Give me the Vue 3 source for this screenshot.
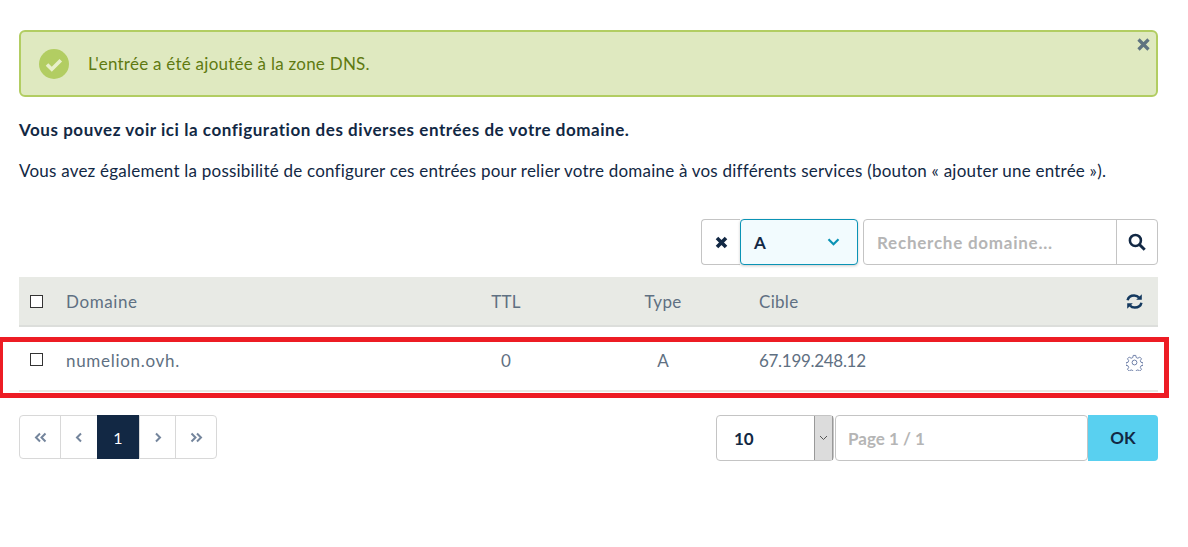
<script setup>
const pages = [
  { k: 'first', w: 40 },
  { k: 'prev', w: 37 },
  { k: 'cur', w: 42 },
  { k: 'next', w: 36 },
  { k: 'last', w: 41 }
]
</script>

<template>
  <div class="page">
    <div class="alert">
      <svg class="ok" width="30" height="30" viewBox="0 0 30 30">
        <circle cx="15" cy="15" r="15" fill="#b2cd62" />
        <path d="M8 15.500l4.800 4.800 9-9" fill="none" stroke="#e8f0ca" stroke-width="3.600" />
      </svg>
      <span class="alert-text">L'entrée a été ajoutée à la zone DNS.</span>
      <svg class="close" width="13" height="13" viewBox="0 0 13 13">
        <path d="M1.500 1.500l10 10M11.500 1.500l-10 10" stroke="#5f7480" stroke-width="3.200" fill="none" />
      </svg>
    </div>

    <p class="lead">Vous pouvez voir ici la configuration des diverses entrées de votre domaine.</p>
    <p class="desc">Vous avez également la possibilité de configurer ces entrées pour relier votre domaine à vos différents services (bouton « ajouter une entrée »).</p>

    <div class="filters">
      <div class="clear">
        <svg width="13" height="13" viewBox="0 0 13 13">
          <path d="M2 2l9 9M11 2l-9 9" stroke="#122844" stroke-width="3.600" fill="none" />
        </svg>
      </div>
      <div class="type-select">
        <span>A</span>
        <svg width="13" height="8" viewBox="0 0 13 8">
          <path d="M1.500 1.200l5 5 5-5" stroke="#0a93b5" stroke-width="2.200" fill="none" />
        </svg>
      </div>
      <div class="search">
        <span class="search-text">Recherche domaine...</span>
        <div class="search-btn">
          <svg width="18" height="18" viewBox="0 0 17 17">
            <circle cx="7" cy="7" r="5.200" fill="none" stroke="#122844" stroke-width="2.400" />
            <path d="M10.800 10.800l5 5" stroke="#122844" stroke-width="2.800" fill="none" />
          </svg>
        </div>
      </div>
    </div>

    <div class="row head">
      <div class="c-check"><span class="box"></span></div>
      <div class="c-domain">Domaine</div>
      <div class="c-ttl">TTL</div>
      <div class="c-type">Type</div>
      <div class="c-target">Cible</div>
      <div class="c-action">
        <svg width="17" height="17" viewBox="0 0 17 17">
          <path d="M1.600 7.200C2.200 4.200 4.800 2.400 8.200 2.400c2 0 3.700.8 4.800 2.100M15.400 9.800c-.6 3-3.200 4.800-6.600 4.800-2 0-3.700-.8-4.800-2.100" fill="none" stroke="#14395f" stroke-width="2.500" />
          <path d="M15.800 1.200v5.600h-5.600zM1.200 15.800v-5.600h5.600z" fill="#14395f" />
        </svg>
      </div>
    </div>

    <div class="row body">
      <div class="c-check"><span class="box"></span></div>
      <div class="c-domain">numelion.ovh.</div>
      <div class="c-ttl">0</div>
      <div class="c-type">A</div>
      <div class="c-target ip">67.199.248.12</div>
      <div class="c-action">
        <svg width="17" height="17" viewBox="0 0 24 24" fill="none" stroke="#6e80a8" stroke-width="1.400">
          <circle cx="12" cy="12" r="3.400" />
          <path d="M10.200 2h3.600l.6 3 2.400 1 2.600-1.700 2.500 2.500-1.700 2.600 1 2.400 3 .6v3.600l-3 .6-1 2.400 1.700 2.600-2.500 2.500-2.600-1.700-2.400 1-.6 3h-3.600l-.6-3-2.400-1-2.600 1.700-2.500-2.500 1.700-2.600-1-2.400-3-.6v-3.600l3-.6 1-2.400-1.700-2.600 2.500-2.500L7.200 6l2.400-1z" />
        </svg>
      </div>
    </div>

    <div class="foot">
      <div class="pager">
        <div v-for="p in pages" :key="p.k" class="pg" :class="{ on: p.k === 'cur' }" :style="{ width: p.w + 'px' }">
          <span v-if="p.k === 'cur'">1</span>
          <svg v-else-if="p.k === 'first'" width="13" height="11" viewBox="0 0 13 11"><path d="M6 1.500L2 5.500l4 4M11.500 1.500l-4 4 4 4" fill="none" stroke="#74859c" stroke-width="2" /></svg>
          <svg v-else-if="p.k === 'prev'" width="8" height="11" viewBox="0 0 8 11"><path d="M6 1.500l-4 4 4 4" fill="none" stroke="#74859c" stroke-width="2" /></svg>
          <svg v-else-if="p.k === 'next'" width="8" height="11" viewBox="0 0 8 11"><path d="M2 1.500l4 4-4 4" fill="none" stroke="#74859c" stroke-width="2" /></svg>
          <svg v-else width="13" height="11" viewBox="0 0 13 11"><path d="M1.500 1.500l4 4-4 4M7 1.500l4 4-4 4" fill="none" stroke="#74859c" stroke-width="2" /></svg>
        </div>
      </div>
      <div class="goto">
        <div class="size">
          <span class="size-val">10</span>
          <span class="spin">
            <svg width="9" height="6" viewBox="0 0 9 6"><path d="M1 1l3.500 3.500L8 1" fill="none" stroke="#555" stroke-width="1" /></svg>
          </span>
        </div>
        <div class="page-input">Page 1 / 1</div>
        <div class="ok-btn">OK</div>
      </div>
    </div>

    <div class="highlight"></div>
  </div>
</template>

<style scoped>
.page {
  position: relative;
  box-sizing: border-box;
  width: 1188px;
  height: 547px;
  padding: 30px 30px 0 19px;
  font-family: Lato, "Noto Sans", sans-serif;
  font-size: 17px;
  color: #122844;
  background: #fff;
  overflow: hidden;
}
.alert {
  position: relative;
  box-sizing: border-box;
  height: 67px;
  display: flex;
  align-items: center;
  gap: 19px;
  padding-left: 18px;
  background: #dfe9c0;
  border: 2px solid #b2cd62;
  border-radius: 6px;
}
.ok { flex: none; }
.alert-text { color: #5f7a10; letter-spacing: .25px; }
.close { position: absolute; top: 6px; right: 6px; }
.lead { margin: 23px 0 0; height: 20px; line-height: 20px; font-weight: 700; letter-spacing: .55px; }
.desc { margin: 21px 0 0; height: 20px; line-height: 20px; letter-spacing: .22px; }
.filters {
  display: flex;
  justify-content: flex-end;
  margin-top: 38px;
  height: 46px;
}
.clear {
  box-sizing: border-box;
  width: 39px;
  display: flex;
  align-items: center;
  justify-content: center;
  border: 1px solid #c4c4c4;
  border-right: 0;
  border-radius: 4px 0 0 4px;
}
.type-select {
  box-sizing: border-box;
  width: 118px;
  display: flex;
  align-items: center;
  justify-content: space-between;
  padding: 0 17px 0 13px;
  background: #f2fbfe;
  border: 1px solid #0a93b5;
  border-radius: 4px;
  box-shadow: 0 1px 3px rgba(0, 0, 0, .2);
  font-weight: 700;
}
.search {
  box-sizing: border-box;
  width: 295px;
  margin-left: 5px;
  display: flex;
  border: 1px solid #c4c4c4;
  border-radius: 4px;
}
.search-text {
  flex: 1;
  padding-left: 13px;
  line-height: 46px;
  color: #b5b5b5;
  font-weight: 700;
  letter-spacing: .75px;
}
.search-btn {
  box-sizing: border-box;
  width: 41px;
  display: flex;
  align-items: center;
  justify-content: center;
  border-left: 1px solid #c4c4c4;
}
.row {
  box-sizing: border-box;
  display: grid;
  grid-template-columns: 47px 379px 122px 192px 1fr 48px;
  color: #5f7082;
}
.head {
  height: 50px;
  margin-top: 12px;
  align-items: center;
  background: #e8eae5;
  border-bottom: 2px solid #dcdedb;
  letter-spacing: .3px;
}
.head .c-domain { letter-spacing: .6px; }
.body {
  height: 65px;
  padding-top: 23px;
  align-items: start;
  border-bottom: 2px solid #e8eae5;
}
.body .c-domain { letter-spacing: .7px; }
.ip { letter-spacing: -.3px; }
.c-check { display: flex; padding-left: 11px; }
.box {
  box-sizing: border-box;
  width: 13px;
  height: 13px;
  border: 1px solid #333;
  background: #fff;
}
.body .c-check { padding-top: 3px; }
.c-ttl, .c-type { text-align: center; }
.c-action { display: flex; justify-content: center; }
.head .c-action { padding-top: 1px; }
.body .c-action { padding-top: 4px; }
.foot {
  display: flex;
  justify-content: space-between;
  margin-top: 23px;
  height: 46px;
}
.pager {
  display: flex;
  height: 44px;
  border: 1px solid #d8d8d8;
  border-radius: 4px;
  box-sizing: border-box;
}
.pg {
  box-sizing: border-box;
  display: flex;
  align-items: center;
  justify-content: center;
  border-left: 1px solid #d8d8d8;
  font-size: 16px;
}
.pg:first-child { border-left: 0; }
.pg.on {
  margin: -1px 0;
  background: #122844;
  border-left: 0;
  color: #fff;
}
.goto { display: flex; }
.size {
  box-sizing: border-box;
  width: 118px;
  display: flex;
  justify-content: space-between;
  border: 1px solid #c4c4c4;
  border-radius: 4px;
}
.size-val { padding-left: 17px; line-height: 46px; font-weight: 700; }
.spin {
  width: 17px;
  display: flex;
  align-items: center;
  justify-content: center;
  background: #dcdcdc;
  border-left: 1px solid #999;
  border-right: 1px solid #999;
}
.page-input {
  box-sizing: border-box;
  width: 253px;
  margin-left: 1px;
  padding-left: 12px;
  line-height: 46px;
  border: 1px solid #c4c4c4;
  border-radius: 4px;
  color: #b5b5b5;
  font-weight: 700;
}
.ok-btn {
  width: 70px;
  text-align: center;
  line-height: 46px;
  background: #59d0f0;
  border-radius: 0 4px 4px 0;
  font-weight: 700;
}
.highlight {
  position: absolute;
  left: 0;
  top: 337px;
  width: 1169px;
  height: 61px;
  box-sizing: border-box;
  border: 5px solid #ed1c24;
  border-left-width: 3px;
  pointer-events: none;
}
</style>

<style>
html, body { margin: 0; background: #fff; }
</style>
